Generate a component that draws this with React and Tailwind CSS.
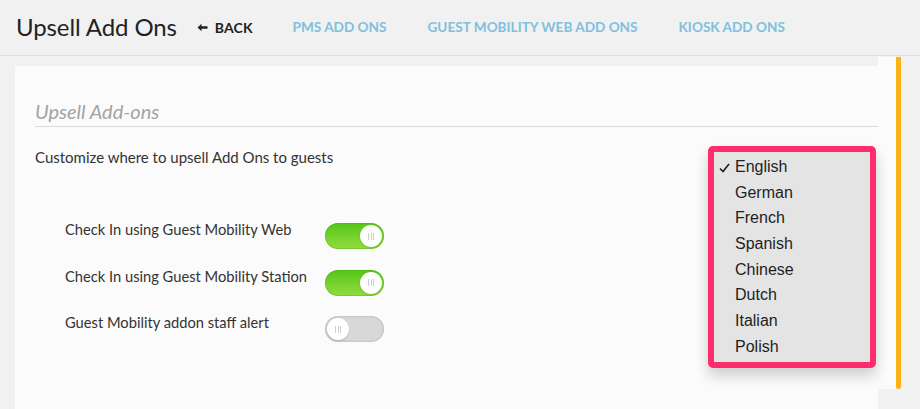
import React from "react";

function Toggle({ on }) {
  return (
    <div
      className={
        "relative h-[26px] w-[59px] rounded-full " +
        (on
          ? "bg-gradient-to-b from-[#52c615] to-[#92dc3e] shadow-[inset_0_0_0_1px_rgba(70,170,20,0.35)]"
          : "bg-[#d8d8d8] shadow-[inset_0_0_0_1.5px_#c9c9c9]")
      }
    >
      <div
        className={
          "absolute top-[2px] flex h-[22px] w-[22px] items-center justify-center gap-[1.5px] rounded-full bg-white shadow-[0_1px_2px_rgba(0,0,0,0.15)] " +
          (on ? "right-[2px]" : "left-[2px]")
        }
      >
        <span className="h-[7px] w-px bg-[#cfcfcf]" />
        <span className="h-[7px] w-px bg-[#cfcfcf]" />
        <span className="h-[7px] w-px bg-[#cfcfcf]" />
      </div>
    </div>
  );
}

const rows = [
  ["Check In using Guest Mobility Web", true],
  ["Check In using Guest Mobility Station", true],
  ["Guest Mobility addon staff alert", false],
];

const langs = ["English", "German", "French", "Spanish", "Chinese", "Dutch", "Italian", "Polish"];

export default function App() {
  return (
    <div
      className="relative h-[409px] w-[920px] overflow-hidden bg-[#f1f1f1] text-[#333]"
      style={{ fontFamily: "Lato, 'Open Sans', sans-serif" }}
    >
      <div className="flex h-[56px] items-center border-b border-[#dedede] pl-4 pb-[1px]">
        <h1 className="text-[24px] font-normal tracking-[-0.1px] text-[#222]">Upsell Add Ons</h1>
        <div className="ml-[20px] flex items-center text-[14px] font-bold tracking-[0.1px] text-[#222]">
          <svg width="11" height="9" viewBox="0 0 11 9" className="mr-[7px]">
            <path d="M0.5 4.5 L4.5 0.8 L4.5 3.3 L10.5 3.3 L10.5 5.7 L4.5 5.7 L4.5 8.2 Z" fill="#222" />
          </svg>
          BACK
        </div>
        <div className="ml-[40px] text-[13.6px] font-bold text-[#80c0de]">PMS ADD ONS</div>
        <div className="ml-[41px] text-[13.6px] font-bold text-[#80c0de]">GUEST MOBILITY WEB ADD ONS</div>
        <div className="ml-[41px] text-[13.6px] font-bold text-[#80c0de]">KIOSK ADD ONS</div>
      </div>
      <div className="flex">
        <div className="ml-[15px] mt-[10px] h-[360px] w-[863px] bg-[#fbfbfb] pl-[20px]">
          <div className="mt-[33px] border-b border-[#dcdcdc] pb-[3px] text-[20px] italic leading-[24px] text-[#a3a3a3]">
            Upsell Add-ons
          </div>
          <div className="mt-[20px] text-[15px] leading-[20px] text-[#333]">
            Customize where to upsell Add Ons to guests
          </div>
          <div className="mt-[55px] flex flex-col gap-[19.5px] pl-[30px]">
            {rows.map(([label, on]) => (
              <div key={label} className="flex items-start">
                <div className="w-[260px] text-[14.7px] leading-[14px] text-[#333]">{label}</div>
                <div className="mt-[1px]">
                  <Toggle on={on} />
                </div>
              </div>
            ))}
          </div>
        </div>
        <div className="mt-[1px] flex h-[332px] w-[24px]">
          <div className="w-[18px] bg-[#fbfbfb]" />
          <div className="w-[5px] rounded-b-full bg-[#fdb114]" />
        </div>
      </div>

      <div className="absolute left-[708px] top-[146px] w-[168px] rounded-[5px] border-[6px] border-[#ff2d6e] bg-[#e4e4e4] py-[2px] shadow-[0_8px_14px_rgba(0,0,0,0.18)]">
        {langs.map((l, i) => (
          <div
            key={l}
            className="relative flex h-[25.7px] items-center pl-[21px] text-[16px] text-[#1e1e1e]"
            style={{ fontFamily: "'Liberation Sans', Arial, sans-serif" }}
          >
            {i === 0 && (
              <svg width="11" height="10" viewBox="0 0 11 10" className="absolute left-[5px] top-[9px]">
                <path d="M1 5.5 L4 8.5 L10 1" fill="none" stroke="#1e1e1e" strokeWidth="1.6" />
              </svg>
            )}
            {l}
          </div>
        ))}
      </div>
    </div>
  );
}
